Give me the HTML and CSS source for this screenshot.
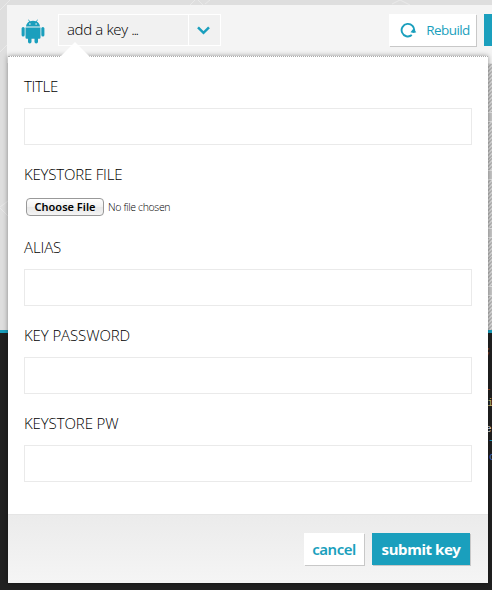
FILE: index.html
```html
<!DOCTYPE html>
<html lang="en">
<head>
<meta charset="utf-8">
<title>Add a key</title>
<link rel="stylesheet" href="styles.css">
</head>
<body>
<main class="page">
  <section class="upper">
    <svg class="texture" width="492" height="330" fill="none" stroke="#e9e9e9">
      <path d="M0 10 10 0M190 5l5-5M198 0l5 5M205 4l5-4M392 4l8-4 10 5M0 52l8-8M0 207l8-6M0 208l8 8"/>
    </svg>
    <header class="toolbar">
      <svg class="android" width="24" height="26" viewBox="0 0 24 26" fill="#1a9fbd">
        <path d="M5 7.500C5.300 5 6.600 3.400 8.300 2.500L7 .8l.5-.4L9 2.200a8.500 8.500 0 0 1 6 0L16.500.4l.5.4-1.300 1.700C17.400 3.400 18.700 5 19 7.500ZM4.500 8.500h15v10q0 1.200-1.200 1.200H17v3a1.700 1.700 0 0 1-3.500 0v-3h-3v3a1.700 1.700 0 0 1-3.500 0v-3H5.700q-1.200 0-1.200-1.200Z"/>
        <rect x=".6" y="8" width="3.100" height="9.500" rx="1.500"/><rect x="20.300" y="8" width="3.100" height="9.500" rx="1.500"/>
        <g fill="#f4f4f4"><circle cx="8.900" cy="5" r=".8"/><circle cx="15.100" cy="5" r=".8"/></g>
      </svg>
      <div class="select">
        <span class="select-text">add a key <span class="dots">...</span></span>
        <span class="select-arrow"><svg width="13" height="9" viewBox="0 0 13 9"><path d="m1 1.300 5.500 5.500L12 1.300" fill="none" stroke="#1a9fbd" stroke-width="2.500"/></svg></span>
      </div>
      <button class="rebuild">
        <svg width="17" height="16" viewBox="0 0 17 16"><path d="M11.800 13.100A6.300 6.300 0 1 1 14.100 9.300" fill="none" stroke="#1a9fbd" stroke-width="1.900"/><path d="M10.500 10.300 13.300 6.800l3 3.500-2.600.8Z" fill="#1a9fbd"/></svg>
        <span>Rebuild</span>
      </button>
      <span class="next"></span>
    </header>
    <div class="hatch"></div>
  </section>
  <section class="console">
    <span class="c1">;</span><span class="c2">-</span><span class="c3">in</span><span class="c4">e</span><span class="c5">-</span><span class="c6">o</span>
  </section>
  <form class="panel">
    <div class="fields">
      <label class="title" for="t">TITLE</label><input id="t" type="text">
      <label class="keystore">KEYSTORE FILE</label>
      <div class="file"><button type="button">Choose File</button><span>No file chosen</span></div>
      <label class="alias" for="a">ALIAS</label><input id="a" type="text">
      <label class="password" for="p">KEY PASSWORD</label><input id="p" type="password">
      <label class="pw" for="k">KEYSTORE PW</label><input id="k" type="password">
    </div>
    <footer class="actions">
      <button type="button" class="cancel">cancel</button>
      <button type="button" class="submit">submit key</button>
    </footer>
  </form>
</main>
</body>
</html>
```
FILE: styles.css
```css
* { box-sizing: border-box; }
body { margin: 0; font-family: "Open Sans", "Noto Sans", sans-serif; color: #000; }
button { margin: 0; padding: 0; border: 0; font-family: inherit; white-space: nowrap; }
svg { display: block; flex: none; }
.page { position: relative; width: 492px; height: 590px; overflow: hidden; }
.upper { position: relative; height: 330px; padding-top: 5px; background: #dedede; }
.texture { position: absolute; left: 0; top: 0; }
.toolbar { position: relative; display: flex; align-items: flex-start; height: 58px; margin-left: 7px; padding: 9px 0 0 14px; background: #f4f4f4; }
.android { margin-top: 5px; }
.select { display: flex; width: 164px; height: 32px; margin-left: 13px; border: 1px solid #fff; background: #f1f1f1; }
.select-text { width: 129px; padding-left: 8px; font-size: 15px; line-height: 29px; letter-spacing: -.35px; white-space: nowrap; font-weight: 300; }
.dots { letter-spacing: -1.500px; }
.select-arrow { display: flex; flex: 1; align-items: center; justify-content: center; padding-right: 2px; border-left: 1px solid #fff; }
.rebuild { display: flex; align-items: center; width: 87px; height: 32px; margin-left: 168px; padding-left: 11px; background: #fff; color: #1a9fbd; box-shadow: 1px 1px 0 #c8c8c8; font-size: 13.500px; font-weight: 400; letter-spacing: -.6px; }
.rebuild span { margin-left: 9px; }
.next { width: 8px; height: 32px; margin-left: 8px; background: #1a9fbd; }
.hatch { height: 267px; margin-left: 488px; background: repeating-linear-gradient(#e4e4e4 0 1px, transparent 1px 49px, #e4e4e4 49px 50px, #c6c6c6 50px 58px), repeating-linear-gradient(135deg, #b9b9b9 0 1.400px, #d6d6d6 1.400px 2.800px); }
.console { position: relative; height: 260px; border-top: 3px solid #1a9fbd; background: #212121; font: 11px "Liberation Mono", monospace; }
.console span { position: absolute; left: 488px; }
.console .c1 { top: 12px; left: 485px; color: #804521; }
.console .c2 { top: 50px; left: 485px; color: #a34b22; }
.console .c3 { top: 64px; left: 487px; color: #c9b36c; }
.console .c4 { top: 90px; left: 485px; color: #ddd; }
.console .c5 { top: 101px; color: #1a9fbd; }
.console .c6 { top: 118px; left: 489px; color: #4770c2; }
.panel { position: absolute; left: 8px; top: 56px; width: 480px; height: 527px; background: #fff; border-top: 1px dotted #aaa; box-shadow: 0 0 5px rgba(0,0,0,.4); }
.panel::before { content: ""; position: absolute; left: 52px; top: -15px; border: solid transparent; border-width: 0 15px 15px; border-bottom-color: #fff; }
.fields { display: flex; flex-direction: column; height: 457px; padding: 18px 16px 0; }
label { height: 22px; margin-bottom: 11px; font-size: 15px; line-height: 22px; font-weight: 300; letter-spacing: -.2px; }
.title { letter-spacing: -.3px; }
.alias { letter-spacing: -.1px; }
.password { letter-spacing: -.1px; }
.pw { letter-spacing: -.1px; }
input { width: 448px; height: 37px; margin: 0 0 18px; padding: 0 8px; border: 1px solid #eaeaea; background: #fff; }
.file { display: flex; align-items: center; height: 22px; margin-bottom: 18px; padding-left: 2px; font-size: 10.500px; font-weight: 300; }
.file button { width: 78px; height: 18px; border: 1px solid #999; border-radius: 4px; background: linear-gradient(#fff, #f1f1f1 50%, #e7e7e7 50%, #f4f4f4); color: #000; font-family: "Noto Sans", sans-serif; font-size: 11px; font-weight: 600; line-height: 16px; }
.file span { margin-left: 4px; letter-spacing: -.35px; }
.actions { display: flex; justify-content: flex-end; gap: 8px; height: 69px; padding: 18px 18px 0 0; border-top: 1px solid #e5e5e5; background: linear-gradient(#ebebeb, #f5f5f5); }
.actions button { height: 32px; padding-bottom: 1px; font-family: "Noto Sans", sans-serif; font-size: 15px; font-weight: 700; box-shadow: 1px 1px 0 #c8c8c8; }
.actions .cancel { width: 60px; background: #fff; color: #1a9fbd; font-weight: 600; letter-spacing: -.5px; }
.actions .submit { width: 98px; background: #1a9fbd; color: #fff; letter-spacing: -.4px; }
```
